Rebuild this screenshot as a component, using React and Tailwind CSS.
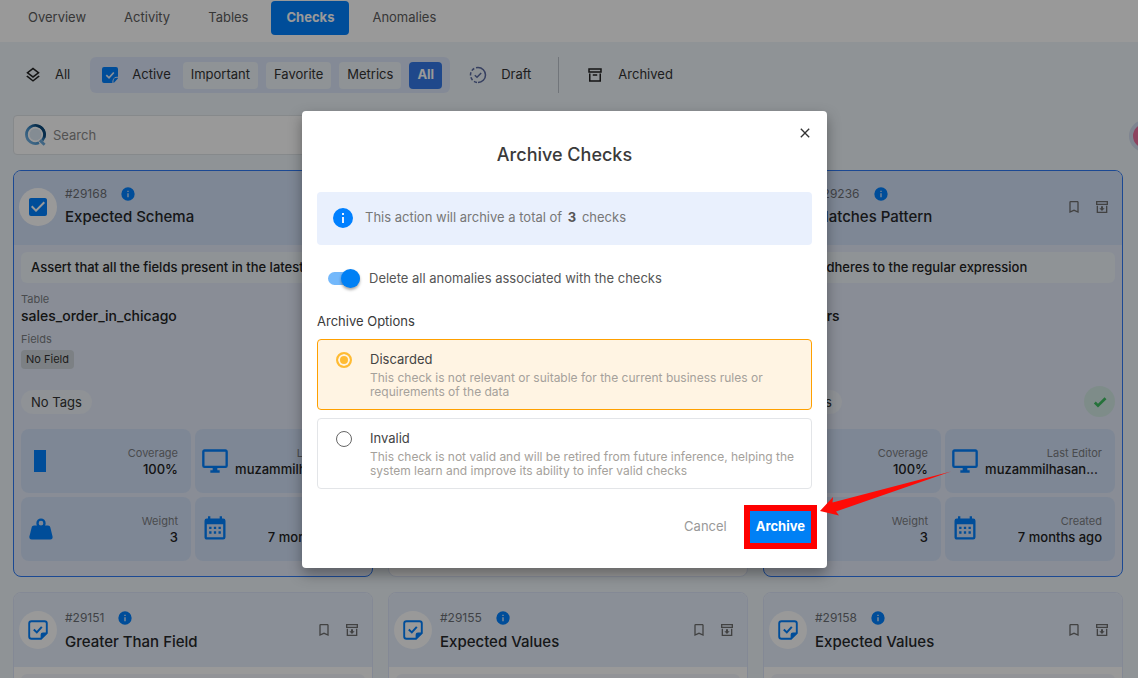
import React from "react";

const PATHS = {
  layers:
    "M12,18.54L19.37,12.8L21,14.07L12,21.07L3,14.07L4.62,12.81L12,18.54M12,16L3,9L12,2L21,9L12,16M12,4.53L6.26,9L12,13.47L17.74,9L12,4.53Z",
  archive:
    "M20 21H4V10H6V19H18V10H20V21M3 3H21V9H3V3M9.5 11H14.5C14.78 11 15 11.22 15 11.5V13H9V11.5C9 11.22 9.22 11 9.5 11M5 5V7H19V5H5Z",
  archiveDown: "M20 21H4V10H6V19H18V10H20V21M3 3H21V9H3V3M5 5V7H19V5M10.5 11V14H8L12 18L16 14H13.5V11",
  bookmark: "M17,18L12,15.82L7,18V5H17M17,3H7A2,2 0 0,0 5,5V21L12,18L19,21V5C19,3.89 18.1,3 17,3Z",
  monitor:
    "M21,16H3V4H21M21,2H3C1.89,2 1,2.89 1,4V16A2,2 0 0,0 3,18H10V20H8V22H16V20H14V18H21A2,2 0 0,0 23,16V4C23,2.89 22.1,2 21,2Z",
  weight:
    "M12,3A4,4 0 0,1 16,7C16,7.73 15.81,8.41 15.46,9H18C18.95,9 19.75,9.67 19.95,10.56C21.96,18.57 22,18.78 22,19A2,2 0 0,1 20,21H4A2,2 0 0,1 2,19C2,18.78 2.04,18.57 4.05,10.56C4.25,9.67 5.05,9 6,9H8.54C8.19,8.41 8,7.73 8,7A4,4 0 0,1 12,3M12,5A2,2 0 0,0 10,7A2,2 0 0,0 12,9A2,2 0 0,0 14,7A2,2 0 0,0 12,5Z",
  calendar:
    "M9,10V12H7V10H9M13,10V12H11V10H13M17,10V12H15V10H17M19,3A2,2 0 0,1 21,5V19A2,2 0 0,1 19,21H5C3.89,21 3,20.1 3,19V5A2,2 0 0,1 5,3H6V1H8V3H16V1H18V3H19M19,19V8H5V19H19M9,14V16H7V14H9M13,14V16H11V14H13M17,14V16H15V14H17Z",
  info: "M13,9H11V7H13M13,17H11V11H13M12,2A10,10 0 0,0 2,12A10,10 0 0,0 12,22A10,10 0 0,0 22,12A10,10 0 0,0 12,2Z",
  checkBold: "M9,20.42L2.79,14.21L5.62,11.38L9,14.77L18.88,4.88L21.71,7.71L9,20.42Z",
  checkbox:
    "M10,17L5,12L6.41,10.58L10,14.17L17.59,6.58L19,8M19,3H5C3.89,3 3,3.89 3,5V19A2,2 0 0,0 5,21H19A2,2 0 0,0 21,19V5C21,3.89 20.1,3 19,3Z",
  close:
    "M19,6.41L17.59,5L12,10.59L6.41,5L5,6.41L10.59,12L5,17.59L6.41,19L12,13.41L17.59,19L19,17.59L13.41,12L19,6.41Z",
  battery: "M6 1H18V23H6Z",
};

function Icon({ name, className }) {
  return (
    <svg viewBox="0 0 24 24" fill="currentColor" aria-hidden="true" className={`shrink-0 ${className}`}>
      <path d={PATHS[name]} />
    </svg>
  );
}

function StickerFilled({ className }) {
  return (
    <svg viewBox="0 0 16 16" aria-hidden="true" className={`shrink-0 ${className}`}>
      <path d="M2 0H14A2 2 0 0 1 16 2V9.8H15A4.6 4.6 0 0 0 10.4 14.4V16H2A2 2 0 0 1 0 14V2A2 2 0 0 1 2 0Z" fill="#0080ff" />
      <path d="M11.4 15.8V14.2A3.4 3.4 0 0 1 14.8 10.8H15.9V11.6L12 15.8Z" fill="#0080ff" />
      <path d="M4.3 8.2L7 10.8L11.8 5.5" fill="none" stroke="#e8effc" strokeWidth="1.7" />
    </svg>
  );
}

function StickerOutline({ className }) {
  return (
    <svg viewBox="0 0 20 20" aria-hidden="true" className={`shrink-0 ${className}`}>
      <path
        d="M3.5 1.2H16.5A2.3 2.3 0 0 1 18.8 3.5V13L13 18.8H3.5A2.3 2.3 0 0 1 1.2 16.5V3.5A2.3 2.3 0 0 1 3.5 1.2Z"
        fill="none"
        stroke="#0080ff"
        strokeWidth="1.9"
      />
      <path d="M12.6 19V15A2.4 2.4 0 0 1 15 12.6H19Z" fill="#0080ff" />
      <path d="M5.8 9.6L8.8 12.4L13.8 6.8" fill="none" stroke="#0080ff" strokeWidth="2" />
    </svg>
  );
}

function DraftIcon({ className }) {
  return (
    <svg viewBox="0 0 18 18" fill="none" stroke="#5a6aa0" strokeWidth="1.5" aria-hidden="true" className={`shrink-0 ${className}`}>
      <path d="M9 1.5A7.5 7.5 0 0 1 9 16.5" />
      <path d="M9 16.5A7.5 7.5 0 0 1 9 1.5" strokeDasharray="3.2 1.9" strokeDashoffset="-1" />
      <path d="M5.8 9.2L8 11.3L12.2 7" />
    </svg>
  );
}

function SearchLogo({ className }) {
  return (
    <svg viewBox="0 0 22 22" fill="none" aria-hidden="true" className={`shrink-0 ${className}`}>
      <defs>
        <linearGradient id="ring" x1="0" y1="1" x2="1" y2="0">
          <stop offset="0" stopColor="#7db9e8" />
          <stop offset="0.5" stopColor="#3f8cc8" />
          <stop offset="0.8" stopColor="#0d4a7c" />
        </linearGradient>
      </defs>
      <circle cx="10.5" cy="10.5" r="6" fill="#dce9f6" />
      <path d="M17.2 16.5A9 9 0 1 0 14 18.8" stroke="url(#ring)" strokeWidth="2.8" />
      <path d="M19.3 13.5A9.2 9.2 0 0 0 14 2.2" stroke="#0d4a7c" strokeWidth="2.4" />
      <path d="M14.8 16.2L19.6 20.8" stroke="#6ba9da" strokeWidth="2.8" />
    </svg>
  );
}

function Stat({ icon, iconClass, label, value, valueClass = "" }) {
  return (
    <div className="flex h-16 min-w-0 items-center justify-between rounded-lg bg-[#d3e1f8] pr-[13px] pb-px pl-1.5">
      <Icon name={icon} className={`text-[#0080ff] ${iconClass}`} />
      <div className="min-w-0 text-right">
        <div className="text-[11px] leading-4 text-[#7a7d82]">{label}</div>
        <div className={`truncate text-[13px] leading-4 font-medium text-[#222] ${valueClass}`}>{value}</div>
      </div>
    </div>
  );
}

function CheckCard({ id, title, selected, schema, assertion, table, passed }) {
  return (
    <article
      className={`min-w-0 overflow-hidden rounded-lg border ${
        selected ? "border-[#2f7bf5] bg-[#e4ecfb]" : "border-[#dce4f8] bg-white"
      }`}
    >
      <header
        className={`flex h-[74px] items-center pr-3 pl-[5px] ${selected ? "bg-[#d3e1f8] pb-0.5" : "bg-[#e6effc]"}`}
      >
        <span className="flex size-[38px] shrink-0 items-center justify-center rounded-full bg-white">
          {schema ? (
            <Icon name="checkbox" className="size-6 text-[#0080ff]" />
          ) : (
            <StickerOutline className="size-5" />
          )}
        </span>
        <div className={`ml-2 min-w-0 flex-1 ${selected ? "" : "pt-1"}`}>
          <div className="flex items-center gap-[13px]">
            <span className="text-[12px] leading-5 text-[#6c6f75]">#{id}</span>
            <Icon name="info" className="size-4 text-[#0080ff]" />
          </div>
          <h3
            className={`truncate text-[15px] font-medium text-[#26282b] ${selected ? "leading-[26px]" : "leading-7"}`}
          >
            {title}
          </h3>
        </div>
        <div className="flex items-center gap-3 text-[#6f6f6f]">
          <button type="button" aria-label="Bookmark">
            <Icon name="bookmark" className="size-4" />
          </button>
          <button type="button" aria-label="Archive check">
            <Icon name="archiveDown" className="size-4" />
          </button>
        </div>
      </header>
      <div className="px-[7px] pt-[7px] pb-[15px]">
        <p
          className={`truncate rounded-md px-2.5 text-[13px] leading-[31px] font-medium text-[#222] ${
            selected ? "bg-[#eef5fa]" : "bg-[#f3f6fc]"
          }`}
        >
          {assertion}
        </p>
        <div className="mt-2 text-[11px] leading-4 text-[#7a7d82]">Table</div>
        <div className="text-[14px] leading-[18px] font-medium text-[#222]">{table}</div>
        <div className="mt-1.5 text-[11px] leading-4 text-[#7a7d82]">Fields</div>
        <div className="mt-[3px] flex">
          <span className="rounded-sm bg-[#cfd6dc] px-[5px] text-[11px] leading-[19px] text-[#333]">No Field</span>
        </div>
        <div className="mt-[17px] flex h-[31px] items-center justify-between">
          <span className="rounded-full bg-[#eef3fa] px-2.5 text-[13px] leading-6 text-[#333]">No Tags</span>
          {passed && (
            <span className="flex size-[31px] items-center justify-center rounded-full bg-[#d3e9e4]">
              <Icon name="checkBold" className="size-4 text-[#3fbf62]" />
            </span>
          )}
        </div>
        <div className="mt-3 grid grid-cols-2 gap-1">
          <Stat icon="battery" iconClass="size-6 ml-px" label="Coverage" value="100%" />
          <Stat icon="monitor" iconClass="size-7" label="Last Editor" value="muzammilhasan..." valueClass="pr-1" />
          <Stat icon="weight" iconClass="size-7" label="Weight" value="3" />
          <Stat icon="calendar" iconClass="size-7" label="Created" value="7 months ago" />
        </div>
      </div>
    </article>
  );
}

const CARDS = [
  { id: "29168", title: "Expected Schema", selected: true, schema: true, assertion: "Assert that all the fields present in the latest", table: "sales_order_in_chicago" },
  { id: "29170", title: "Expected Values", assertion: "Assert that values are expected", table: "orders" },
  { id: "29236", title: "Matches Pattern", selected: true, assertion: "Value adheres to the regular expression", table: "producers", passed: true },
  { id: "29151", title: "Greater Than Field", assertion: "Assert that the field is greater", table: "orders" },
  { id: "29155", title: "Expected Values", assertion: "Assert that values are expected", table: "orders" },
  { id: "29158", title: "Expected Values", assertion: "Assert that values are expected", table: "orders" },
];

const TABS = ["Overview", "Activity", "Tables", "Checks", "Anomalies"];

function Page() {
  return (
    <div className="h-full">
      <nav className="flex h-[42px] gap-2 bg-white pt-px pl-[13px]">
        {TABS.map((tab) => (
          <a
            key={tab}
            href="#"
            className={`h-[34px] rounded-sm px-[15px] text-[13px] leading-8 ${
              tab === "Checks" ? "bg-[#0080ff] font-bold text-white" : "text-[#5c5c5c]"
            }`}
          >
            {tab}
          </a>
        ))}
      </nav>

      <div className="mt-[15px] flex h-9 items-center pl-6 text-[13px] text-[#333]">
        <button type="button" className="flex items-center gap-[13px]">
          <Icon name="layers" className="size-[18px] text-[#222]" />
          All
        </button>
        <div className="ml-5 flex h-9 items-center gap-2 rounded-md bg-[#dde7fb] pr-2 pl-3">
          <button type="button" className="mr-1 flex items-center gap-3.5">
            <StickerFilled className="size-4" />
            Active
          </button>
          {["Important", "Favorite", "Metrics"].map((f) => (
            <button key={f} type="button" className="h-[27px] rounded-sm bg-[#eef5fa] px-2">
              {f}
            </button>
          ))}
          <button type="button" className="h-[27px] rounded-sm bg-[#3579e8] px-2 font-bold text-white">
            All
          </button>
        </div>
        <button type="button" className="ml-[19px] flex items-center gap-3.5">
          <DraftIcon className="size-[18px]" />
          Draft
        </button>
        <div className="ml-[27px] h-9 w-px bg-[#bcc4cc]" />
        <button type="button" className="ml-[27px] flex items-center gap-3.5">
          <Icon name="archive" className="size-[18px] text-[#222]" />
          Archived
        </button>
      </div>

      <div className="pr-[15px] pl-[13px]">
        <label className="mt-[22px] flex h-10 w-full max-w-[735px] items-center gap-1.5 rounded-sm border border-[#e0e4e8] bg-white pl-[11px]">
          <SearchLogo className="size-[22px]" />
          <input
            type="text"
            aria-label="Search"
            placeholder="Search"
            className="min-w-0 flex-1 bg-transparent pt-px text-[13px] outline-none placeholder:text-[#8a8a8a]"
          />
        </label>
        <main className="mt-[15px] grid grid-cols-3 gap-[15px]">
          {CARDS.map((card) => (
            <CheckCard key={card.id} {...card} />
          ))}
        </main>
      </div>
      <span className="absolute top-[120px] -right-[23px] size-8 rounded-full border-4 border-[#d3dcf0] bg-[#e9719f]" />
    </div>
  );
}

function Option({ title, text, checked }) {
  return (
    <label
      className={`flex h-[71px] items-start rounded-sm border pt-[9px] pr-3 pl-[18px] ${
        checked ? "border-[#ffa000] bg-[#fff4e3]" : "border-[#e3e5e8] bg-white"
      }`}
    >
      <input
        type="radio"
        name="archive-option"
        defaultChecked={checked}
        className="mt-[3px] size-4 shrink-0 appearance-none rounded-full border-[1px] border-[#666] bg-white checked:border-2 checked:border-[#ffbb33] checked:bg-[#ffbb33] checked:shadow-[inset_0_0_0_2px_#fff4e3]"
      />
      <span className="ml-[18px]">
        <span className="block text-[13px] leading-5 text-[#444]">{title}</span>
        <span className="mt-0.5 block text-[12px] leading-[14px] text-[#a5a19b]">{text}</span>
      </span>
    </label>
  );
}

function ArchiveDialog() {
  return (
    <div className="absolute inset-0 flex items-center justify-center bg-black/40 pr-[9px]">
      <section
        role="dialog"
        aria-labelledby="dialog-title"
        className="relative w-full max-w-[525px] rounded-sm bg-white px-[15px] pt-3.5 pb-[25px] shadow-[0_6px_14px_rgba(0,0,0,0.35)]"
      >
        <div className="flex justify-end">
          <button type="button" aria-label="Close" className="-mr-px text-[#333]">
            <Icon name="close" className="size-4" />
          </button>
        </div>
        <h2 id="dialog-title" className="text-center text-[18px] leading-7 font-medium text-[#3a3a3a]">
          Archive Checks
        </h2>
        <div className="mt-[23px] flex h-[53px] items-center gap-2.5 rounded-sm bg-[#e9f0fd] px-3.5 text-[13px] text-[#777]">
          <Icon name="info" className="size-6 text-[#0080ff]" />
          <p>
            This action will archive a total of <b className="mx-0.5 text-[#555]">3</b> checks
          </p>
        </div>
        <label className="mt-6 flex h-5 items-center gap-[9px] pl-[11px] text-[13px] text-[#555]">
          <input
            type="checkbox"
            role="switch"
            defaultChecked
            className="flex h-[13px] w-8 shrink-0 appearance-none items-center justify-end rounded-full bg-[#73b8fb] after:size-[19px] after:rounded-full after:bg-[#0080f5] after:shadow-[0_2px_3px_rgba(0,0,0,0.35)] after:content-['']"
          />
          Delete all anomalies associated with the checks
        </label>
        <fieldset className="mt-[22px]">
          <legend className="text-[13px] leading-5 text-[#3a3a3a]">Archive Options</legend>
          <div className="mt-2 flex flex-col gap-2">
            <Option
              checked
              title="Discarded"
              text="This check is not relevant or suitable for the current business rules or requirements of the data"
            />
            <Option
              title="Invalid"
              text="This check is not valid and will be retired from future inference, helping the system learn and improve its ability to infer valid checks"
            />
          </div>
        </fieldset>
        <div className="mt-[22px] flex h-8 items-center justify-end gap-[23px] text-[13px]">
          <button type="button" className="text-[#999]">
            Cancel
          </button>
          <div className="relative mr-px">
            <button type="button" className="block h-8 bg-[#0080f5] px-1.5 font-bold text-white">
              Archive
            </button>
            <div className="pointer-events-none absolute -inset-1.5 border-6 border-[#fe0000]" />
            <svg
              viewBox="0 0 132 46"
              aria-hidden="true"
              className="pointer-events-none absolute -top-10 left-full ml-2 h-[46px] w-[132px] max-w-none"
              fill="#fe0b06"
            >
              <path d="M1 40L14 26L13.5 31.5L132 0.5L17 40.5L20 44.5Z" />
            </svg>
          </div>
        </div>
      </section>
    </div>
  );
}

export default function App() {
  return (
    <div className="relative h-screen overflow-hidden bg-[#eef5fa] font-[Inter,sans-serif]">
      <Page />
      <ArchiveDialog />
    </div>
  );
}
